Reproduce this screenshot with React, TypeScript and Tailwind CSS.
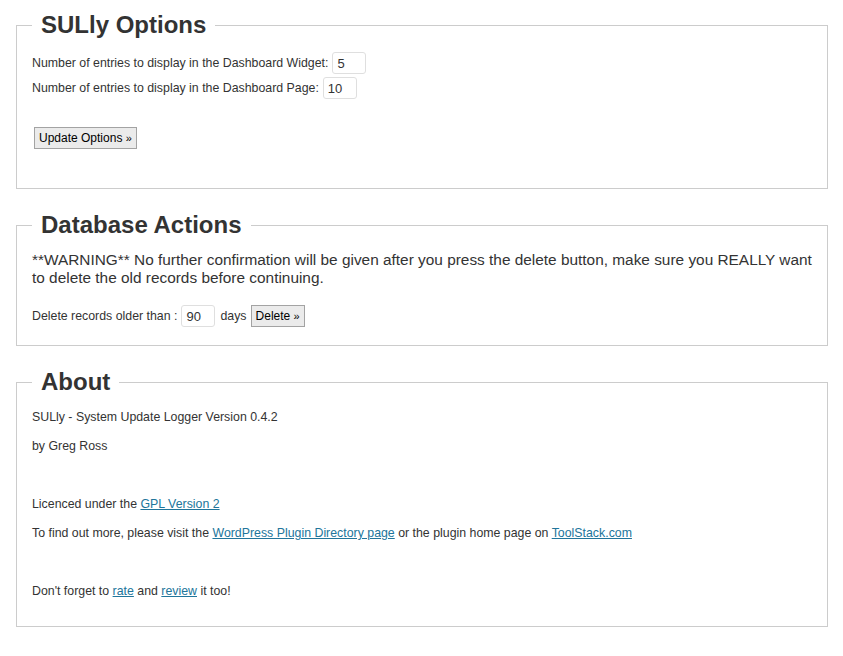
const FONT = "font-['Liberation_Sans',Arial,sans-serif]";

function Box({ title, children, className = "" }: { title: string; children: React.ReactNode; className?: string }) {
  return (
    <fieldset className={`border border-[#cccccc] px-[15px] ${className}`}>
      <legend className="px-[9px] text-[24px] leading-[28px] font-bold text-[#333333]">{title}</legend>
      {children}
    </fieldset>
  );
}

function NumInput({ value }: { value: string }) {
  return (
    <input
      defaultValue={value}
      className="w-[34px] h-[22px] border border-[#dfdfdf] rounded-[3px] px-[4px] text-[13px] text-[#333333] bg-white outline-none"
    />
  );
}

function Btn({ label }: { label: string }) {
  return (
    <button className="h-[22px] px-[4px] border border-[#a3a3a3] bg-[#ebebeb] text-[12px] text-black leading-none">
      {label} <span className="text-[11px]">»</span>
    </button>
  );
}

const linkCls = "text-[#21759b] underline";

export default function App() {
  return (
    <div className={`${FONT} bg-white text-[#333333] text-[12.35px] min-h-[656px] pt-[11px] pl-[16px] pr-[15px]`}>
      <Box title="SULly Options" className="pb-[39px]">
        <div className="mt-[13px] flex flex-col gap-[3px]">
          <div className="flex items-center gap-[4px]">
            <span>Number of entries to display in the Dashboard Widget:</span>
            <NumInput value="5" />
          </div>
          <div className="flex items-center gap-[4px]">
            <span>Number of entries to display in the Dashboard Page:</span>
            <NumInput value="10" />
          </div>
        </div>
        <div className="mt-[28px] ml-[2px]">
          <Btn label="Update Options" />
        </div>
      </Box>

      <Box title="Database Actions" className="mt-[22px] pb-[18px]">
        <p className="mt-[12px] text-[15.4px] leading-[18px]">
          **WARNING** No further confirmation will be given after you press the delete button, make sure you REALLY want
          to delete the old records before continuing.
        </p>
        <div className="mt-[18px] flex items-center">
          <span>Delete records older than :</span>
          <span className="ml-[4px]">
            <NumInput value="90" />
          </span>
          <span className="ml-[5px]">days</span>
          <span className="ml-[4px]">
            <Btn label="Delete" />
          </span>
        </div>
      </Box>

      <Box title="About" className="mt-[22px] pb-[14px]">
        <div className="mt-[13px] leading-[17px] flex flex-col gap-[12px] pb-[12px]">
          <p>SULly - System Update Logger Version 0.4.2</p>
          <p>by Greg Ross</p>
          <p className="h-[17px]"></p>
          <p>
            Licenced under the <a className={linkCls} href="#">GPL Version 2</a>
          </p>
          <p>
            To find out more, please visit the{" "}
            <a className={linkCls} href="#">WordPress Plugin Directory page</a> or the plugin home page on{" "}
            <a className={linkCls} href="#">ToolStack.com</a>
          </p>
          <p className="h-[17px]"></p>
          <p>
            Don't forget to <a className={linkCls} href="#">rate</a> and <a className={linkCls} href="#">review</a> it too!
          </p>
        </div>
      </Box>
    </div>
  );
}
